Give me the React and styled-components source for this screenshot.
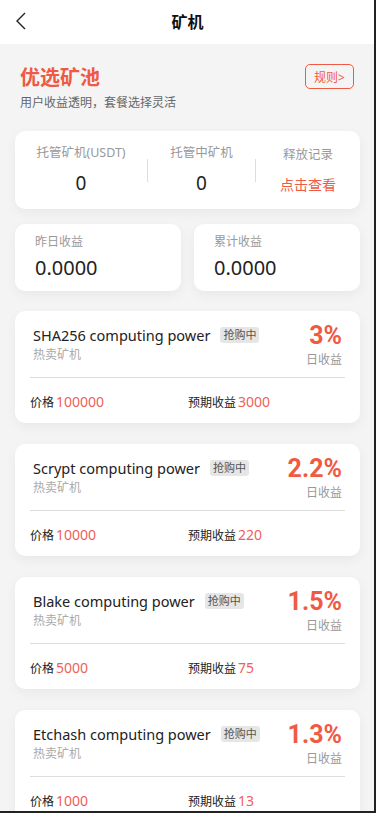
import React from 'react'
import styled, { createGlobalStyle } from 'styled-components'

const GlobalStyle = createGlobalStyle`
  * { box-sizing: border-box; }
  body {
    margin: 0;
    background: #f4f4f4;
    font-family: "Noto Sans", "Noto Sans CJK SC", sans-serif;
    color: #222;
  }
`

const ORANGE = '#ef5a43'
const VALUE_RED = '#f0605a'

const Page = styled.div`
  width: 375px;
  min-height: 100vh;
  background: #f4f4f4;
  padding-bottom: 20px;
`

const Frame = styled.div`
  position: fixed;
  inset: 0;
  border-right: 2px solid #222;
  border-bottom: 2px solid #222;
  pointer-events: none;
`

const Header = styled.header`
  height: 44px;
  background: #fff;
  display: flex;
  align-items: center;
  justify-content: center;
  position: relative;
`

const Back = styled.button`
  position: absolute;
  left: 10px;
  top: 10px;
  width: 20px;
  height: 22px;
  border: none;
  background: transparent;
  padding: 0;
  display: flex;
  align-items: center;
  justify-content: center;
`

const Title = styled.h1`
  margin: 0;
  font-size: 16px;
  font-weight: 700;
  color: #111;
  line-height: 22px;
`

const Intro = styled.section`
  display: flex;
  justify-content: space-between;
  align-items: flex-start;
  padding: 20px 20px 0 20px;
`

const IntroText = styled.div`
  display: flex;
  flex-direction: column;
  gap: 2px;
`

const PoolTitle = styled.h2`
  margin: 0;
  font-size: 20px;
  line-height: 28px;
  font-weight: 700;
  color: ${ORANGE};
`

const PoolSub = styled.p`
  margin: 0;
  font-size: 12px;
  line-height: 18px;
  color: #666;
`

const RuleButton = styled.button`
  height: 25px;
  width: 49px;
  margin-right: 1px;
  border: 1px solid ${ORANGE};
  border-radius: 5px;
  background: transparent;
  color: ${ORANGE};
  font-family: inherit;
  font-size: 12px;
  padding: 0;
`

const Card = styled.div`
  background: #fff;
  border-radius: 10px;
  box-shadow: 0 4px 12px rgba(0, 0, 0, 0.05);
`

const Summary = styled(Card)`
  margin: 19px 15px 0;
  height: 78px;
  display: flex;
  align-items: center;
`

const SummaryCol = styled.div`
  width: ${p => p.$w ? `${p.$w}px` : 'auto'};
  flex: ${p => p.$w ? 'none' : '1'};
  display: flex;
  flex-direction: column;
  align-items: center;
  gap: 6px;
`

const SummaryLabel = styled.span`
  font-size: 12.5px;
  line-height: 20px;
  color: #999;
  margin-top: ${p => p.$shift || 0}px;
`

const SummaryValue = styled.span`
  font-size: 19px;
  line-height: 28px;
  color: #222;
`

const SummaryLink = styled.span`
  font-size: 14px;
  line-height: 28px;
  color: ${ORANGE};
`

const VDivider = styled.div`
  width: 1px;
  height: 23px;
  background: #ddd;
`

const StatRow = styled.div`
  display: grid;
  grid-template-columns: 1fr 1fr;
  gap: 13px;
  margin: 15px 15px 0;
`

const StatCard = styled(Card)`
  height: 67px;
  padding: 9px 20px 0;
  display: flex;
  flex-direction: column;
  gap: 4px;
`

const StatLabel = styled.span`
  font-size: 12px;
  line-height: 18px;
  color: #999;
`

const StatValue = styled.span`
  font-size: 20px;
  line-height: 26px;
  color: #222;
`

const ProductList = styled.div`
  display: flex;
  flex-direction: column;
  gap: 21px;
  margin: 20px 15px 0;
`

const Product = styled(Card)`
  padding-top: 11px;
`

const ProductTop = styled.div`
  display: flex;
  justify-content: space-between;
  padding: 0 18px;
`

const ProductInfo = styled.div`
  padding-top: 2px;
  display: flex;
  flex-direction: column;
`

const NameRow = styled.div`
  display: flex;
  align-items: center;
`

const ProductName = styled.span`
  font-size: 14.5px;
  line-height: 22px;
  color: #222;
`

const Badge = styled.span`
  margin-left: 10px;
  height: 16px;
  padding: 0 3px;
  border-radius: 3px;
  background: #e6e6e6;
  color: #555;
  font-size: 11px;
  line-height: 16px;
`

const Hot = styled.span`
  font-size: 12px;
  line-height: 18px;
  color: #aaa;
`

const Rate = styled.div`
  display: flex;
  flex-direction: column;
  align-items: flex-end;
`

const RateValue = styled.span`
  margin-top: 2px;
  font-family: Roboto, "Noto Sans", sans-serif;
  font-size: 25px;
  line-height: 24px;
  font-weight: 700;
  color: ${ORANGE};
`

const RateLabel = styled.span`
  margin-top: 3px;
  font-size: 12px;
  line-height: 17px;
  color: #999;
`

const HLine = styled.div`
  height: 1px;
  margin: 9px 15px 0;
  background: #ddd;
`

const ProductBottom = styled.div`
  display: grid;
  grid-template-columns: 158px 1fr;
  padding: 14px 15px 10px;
`

const Field = styled.span`
  font-size: 12px;
  line-height: 20px;
  color: #222;
`

const FieldValue = styled.span`
  margin-left: 2px;
  font-size: 14px;
  color: ${VALUE_RED};
`

const products = [
  { name: 'SHA256 computing power', rate: '3%', price: '100000', income: '3000' },
  { name: 'Scrypt computing power', rate: '2.2%', price: '10000', income: '220' },
  { name: 'Blake computing power', rate: '1.5%', price: '5000', income: '75' },
  { name: 'Etchash computing power', rate: '1.3%', price: '1000', income: '13' },
]

export default function App() {
  return (
    <Page>
      <GlobalStyle />
      <Header>
        <Back aria-label="返回">
          <svg width="11" height="18" viewBox="0 0 11 18" fill="none">
            <polyline points="10,1 2,9 10,17" stroke="#222" strokeWidth="1.4" />
          </svg>
        </Back>
        <Title>矿机</Title>
      </Header>

      <Intro>
        <IntroText>
          <PoolTitle>优选矿池</PoolTitle>
          <PoolSub>用户收益透明，套餐选择灵活</PoolSub>
        </IntroText>
        <RuleButton>规则&gt;</RuleButton>
      </Intro>

      <Summary>
        <SummaryCol $w={132}>
          <SummaryLabel>托管矿机(USDT)</SummaryLabel>
          <SummaryValue>0</SummaryValue>
        </SummaryCol>
        <VDivider />
        <SummaryCol $w={107}>
          <SummaryLabel>托管中矿机</SummaryLabel>
          <SummaryValue>0</SummaryValue>
        </SummaryCol>
        <VDivider />
        <SummaryCol>
          <SummaryLabel $shift={3}>释放记录</SummaryLabel>
          <SummaryLink>点击查看</SummaryLink>
        </SummaryCol>
      </Summary>

      <StatRow>
        <StatCard>
          <StatLabel>昨日收益</StatLabel>
          <StatValue>0.0000</StatValue>
        </StatCard>
        <StatCard>
          <StatLabel>累计收益</StatLabel>
          <StatValue>0.0000</StatValue>
        </StatCard>
      </StatRow>

      <ProductList>
        {products.map(p => (
          <Product key={p.name}>
            <ProductTop>
              <ProductInfo>
                <NameRow>
                  <ProductName>{p.name}</ProductName>
                  <Badge>抢购中</Badge>
                </NameRow>
                <Hot>热卖矿机</Hot>
              </ProductInfo>
              <Rate>
                <RateValue>{p.rate}</RateValue>
                <RateLabel>日收益</RateLabel>
              </Rate>
            </ProductTop>
            <HLine />
            <ProductBottom>
              <Field>价格<FieldValue>{p.price}</FieldValue></Field>
              <Field>预期收益<FieldValue>{p.income}</FieldValue></Field>
            </ProductBottom>
          </Product>
        ))}
      </ProductList>
      <Frame />
    </Page>
  )
}
